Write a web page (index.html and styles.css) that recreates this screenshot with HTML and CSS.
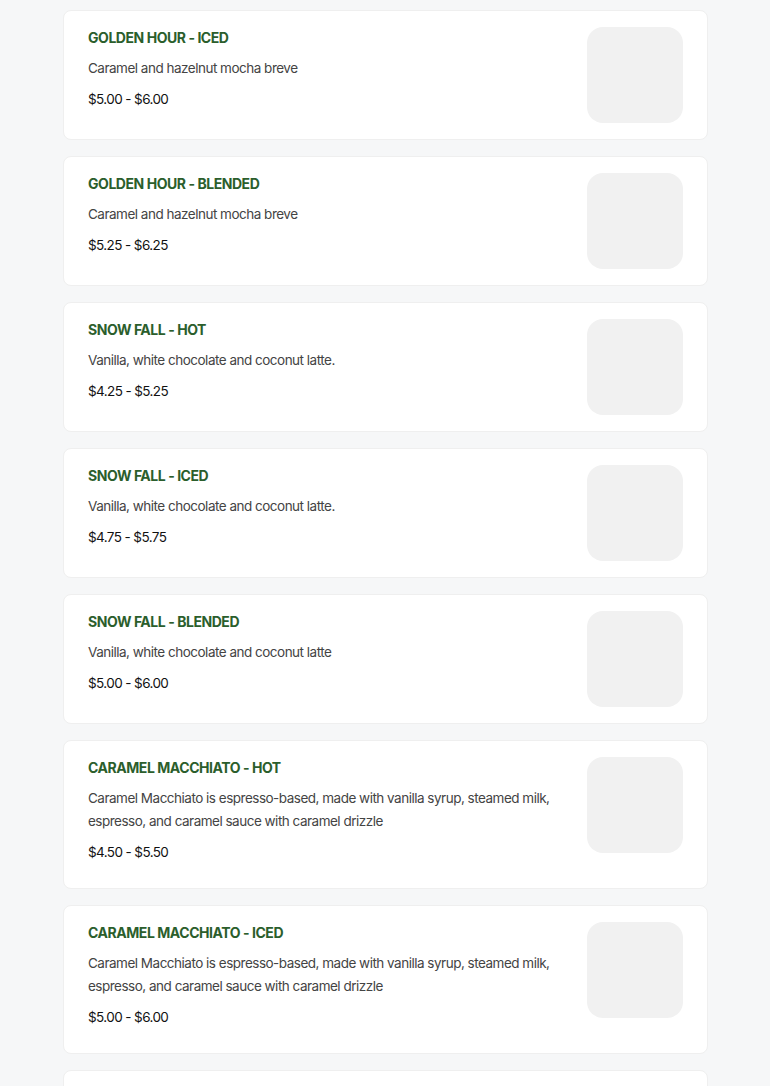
FILE: index.html
```html
<!DOCTYPE html>
<html>
<head>
<meta charset="utf-8">
<link rel="stylesheet" href="styles.css">
</head>
<body>
<main class="list">
  <article class="card">
    <div class="info">
      <h3 class="title">GOLDEN HOUR - ICED</h3>
      <p class="desc">Caramel and hazelnut mocha breve</p>
      <p class="price">$5.00 - $6.00</p>
    </div>
    <div class="thumb"></div>
  </article>
  <article class="card">
    <div class="info">
      <h3 class="title">GOLDEN HOUR - BLENDED</h3>
      <p class="desc">Caramel and hazelnut mocha breve</p>
      <p class="price">$5.25 - $6.25</p>
    </div>
    <div class="thumb"></div>
  </article>
  <article class="card">
    <div class="info">
      <h3 class="title">SNOW FALL - HOT</h3>
      <p class="desc">Vanilla, white chocolate and coconut latte.</p>
      <p class="price">$4.25 - $5.25</p>
    </div>
    <div class="thumb"></div>
  </article>
  <article class="card">
    <div class="info">
      <h3 class="title">SNOW FALL - ICED</h3>
      <p class="desc">Vanilla, white chocolate and coconut latte.</p>
      <p class="price">$4.75 - $5.75</p>
    </div>
    <div class="thumb"></div>
  </article>
  <article class="card">
    <div class="info">
      <h3 class="title">SNOW FALL - BLENDED</h3>
      <p class="desc">Vanilla, white chocolate and coconut latte</p>
      <p class="price">$5.00 - $6.00</p>
    </div>
    <div class="thumb"></div>
  </article>
  <article class="card">
    <div class="info">
      <h3 class="title">CARAMEL MACCHIATO - HOT</h3>
      <p class="desc">Caramel Macchiato is espresso-based, made with vanilla syrup, steamed milk, espresso, and caramel sauce with caramel drizzle</p>
      <p class="price">$4.50 - $5.50</p>
    </div>
    <div class="thumb"></div>
  </article>
  <article class="card">
    <div class="info">
      <h3 class="title">CARAMEL MACCHIATO - ICED</h3>
      <p class="desc">Caramel Macchiato is espresso-based, made with vanilla syrup, steamed milk, espresso, and caramel sauce with caramel drizzle</p>
      <p class="price">$5.00 - $6.00</p>
    </div>
    <div class="thumb"></div>
  </article>
  <article class="card">
    <div class="info">
      <h3 class="title">CARAMEL MACCHIATO - BLENDED</h3>
      <p class="desc">Caramel Macchiato is espresso-based, made with vanilla syrup, steamed milk, espresso, and caramel sauce with caramel drizzle</p>
      <p class="price">$5.25 - $6.25</p>
    </div>
    <div class="thumb"></div>
  </article>
</main>
</body>
</html>
```
FILE: styles.css
```css
* { box-sizing: border-box; }
html, body { margin: 0; padding: 0; }
body {
  background: #f6f7f8;
  font-family: Inter, "Liberation Sans", sans-serif;
  height: 1086px;
  overflow: hidden;
}
.list {
  width: 645px;
  margin: 0 0 0 63px;
  padding-top: 10px;
  display: flex;
  flex-direction: column;
  gap: 16px;
}
.card {
  background: #ffffff;
  border: 1px solid #efefef;
  border-radius: 8px;
  padding: 16px 24px 16px 24px;
  display: flex;
  align-items: flex-start;
  gap: 24px;
}
.info {
  flex: 1;
  min-width: 0;
  padding-top: 1px;
  padding-bottom: 8px;
}
.title {
  margin: 0 0 9px 0;
  font-size: 14px;
  line-height: 20px;
  font-weight: 700;
  color: #2b5e2c;
  letter-spacing: -0.45px;
}
.desc {
  margin: 0 0 8px 0;
  font-size: 13.5px;
  line-height: 23px;
  color: #444444;
  letter-spacing: -0.5px;
}
.price {
  margin: 0;
  font-size: 13.5px;
  line-height: 23px;
  color: #111111;
  letter-spacing: -0.6px;
}
.thumb {
  flex: 0 0 96px;
  width: 96px;
  height: 96px;
  border-radius: 16px;
  background: #f1f1f1;
}
```
